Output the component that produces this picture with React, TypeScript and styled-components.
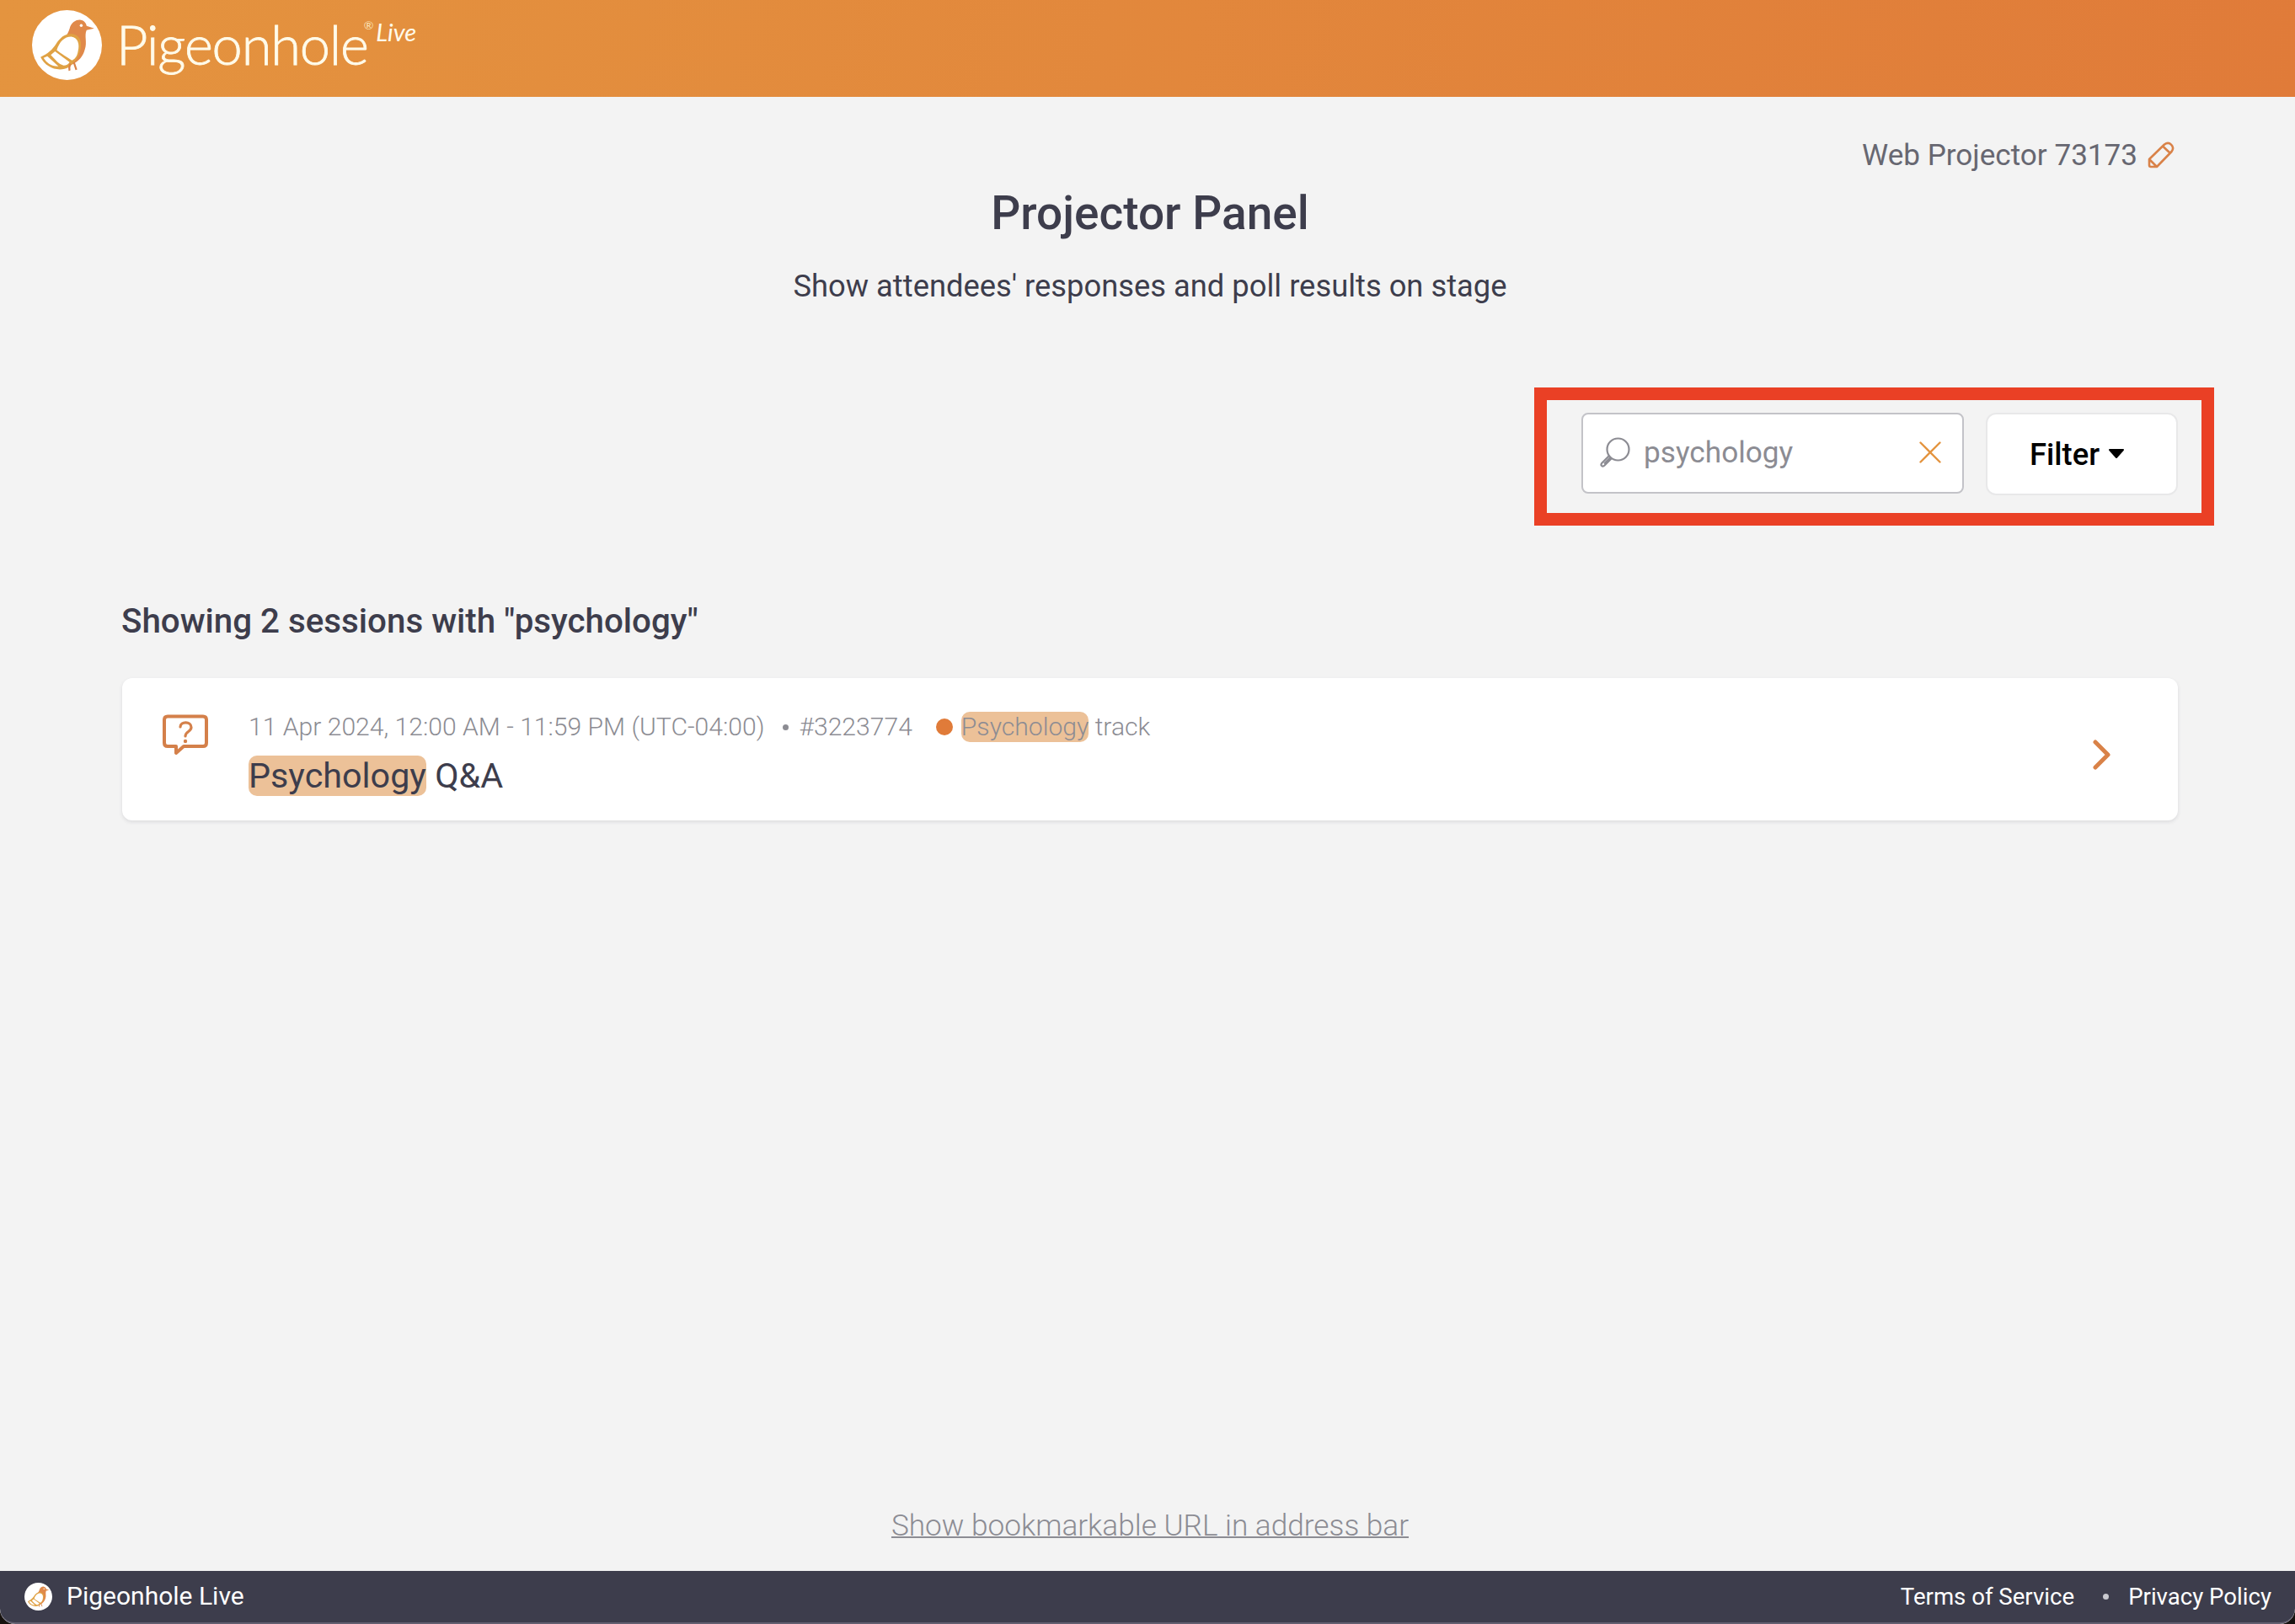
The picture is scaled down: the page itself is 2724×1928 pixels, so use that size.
import React from "react";
import styled, { createGlobalStyle } from "styled-components";

const GlobalStyle = createGlobalStyle`
  * {
    box-sizing: border-box;
  }

  body {
    margin: 0;
    background: #17120f;
    font-family: Roboto, "Liberation Sans", sans-serif;
    color: #3d3d4c;
  }
`;

const Page = styled.div`
  display: flex;
  flex-direction: column;
  height: 1928px;
  overflow: hidden;
  background: #f3f3f3;
  border-radius: 0 0 18px 18px;
`;

const Header = styled.header`
  display: flex;
  align-items: flex-start;
  height: 115px;
  flex-shrink: 0;
  padding: 12px 38px;
  background: linear-gradient(100deg, #e4943f, #e07b39);
`;

const Wordmark = styled.span`
  margin-left: 17px;
  font-family: Lato, "Open Sans", sans-serif;
  font-weight: 300;
  font-size: 65px;
  line-height: 81px;
  letter-spacing: -1.2px;
  -webkit-text-stroke: 0.8px #fffbea;
  color: #fffbea;
`;

const Registered = styled.span`
  margin-top: 6px;
  margin-left: -5px;
  font-family: Lato, sans-serif;
  font-size: 14px;
  line-height: 24px;
  color: #fbe3b8;
`;

const Live = styled.span`
  margin-left: 3px;
  font-family: Lato, sans-serif;
  font-style: italic;
  font-size: 29px;
  line-height: 51px;
  color: #fffbea;
`;

const Main = styled.main`
  display: flex;
  flex-direction: column;
  flex: 1;
  padding: 0 139px 0 145px;
`;

const ProjectorName = styled.div`
  display: flex;
  align-items: center;
  align-self: flex-end;
  gap: 12px;
  margin-top: 48px;
  margin-right: 4px;
  font-size: 35.1px;
  line-height: 42px;
  color: #676771;
`;

const Title = styled.h1`
  margin: 16px 0 0;
  font-weight: 500;
  font-size: 55px;
  line-height: 64px;
  text-align: center;
`;

const Subtitle = styled.p`
  margin: 34px 0 0;
  font-size: 36.35px;
  line-height: 42px;
  text-align: center;
`;

const Toolbar = styled.div`
  display: flex;
  align-items: flex-start;
  align-self: flex-end;
  gap: 26px;
  width: 807px;
  height: 164px;
  margin-top: 99px;
  margin-right: -43px;
  padding: 15px 0 0 41px;
  border: 15px solid #ea4025;
`;

const SearchBox = styled.div`
  display: flex;
  align-items: center;
  width: 454px;
  height: 96px;
  padding: 0 25px 2px 20px;
  background: #fff;
  border: 2px solid #c3c3c8;
  border-radius: 8px;
`;

const SearchText = styled.span`
  flex: 1;
  margin-left: 16px;
  font-size: 35.2px;
  color: #8c8c93;
`;

const FilterButton = styled.button`
  display: flex;
  align-items: center;
  justify-content: center;
  gap: 10px;
  width: 228px;
  height: 98px;
  padding: 0 11px 0 0;
  background: #fff;
  border: 2px solid #e8e8e9;
  border-radius: 12px;
  font-family: inherit;
  font-weight: 500;
  font-size: 36.4px;
  color: #000;
`;

const ResultHeading = styled.h2`
  margin: 91px 0 0 -1px;
  font-weight: 500;
  font-size: 40.3px;
  line-height: 46px;
`;

const SessionCard = styled.div`
  display: flex;
  align-items: flex-start;
  width: 2440px;
  height: 169px;
  margin-top: 44px;
  padding: 39px 78px 0 48px;
  background: #fff;
  border-radius: 12px;
  box-shadow: 0 2px 4px rgba(61, 61, 76, 0.12);
`;

const SessionBody = styled.div`
  flex: 1;
  margin-left: 48px;
`;

const Meta = styled.div`
  display: flex;
  align-items: center;
  height: 38px;
  font-weight: 300;
  font-size: 30.1px;
  line-height: 36px;
  white-space: pre;
  color: #8c8c93;
`;

const Dot = styled.span<{ $size: number; $color: string; $gap: string }>`
  width: ${(p) => p.$size}px;
  height: ${(p) => p.$size}px;
  margin: ${(p) => p.$gap};
  border-radius: 50%;
  background: ${(p) => p.$color};
`;

const Highlight = styled.mark`
  border-radius: 10px;
  background: #ecc198;
  color: inherit;
`;

const SessionTitle = styled.div`
  margin-top: 15px;
  font-size: 41.3px;
  line-height: 48px;
`;

const Chevron = styled.svg`
  margin-top: 34px;
`;

const BookmarkLink = styled.a`
  align-self: center;
  margin-top: auto;
  margin-bottom: 32px;
  font-weight: 300;
  font-size: 35.2px;
  line-height: 44px;
  color: #8c8c93;
  text-decoration: underline;
  text-decoration-thickness: 2px;
`;

const Footer = styled.footer`
  display: flex;
  align-items: center;
  height: 63px;
  flex-shrink: 0;
  padding: 0 28px 0 29px;
  background: #3d3d4c;
  border-bottom: 2px solid #625f70;
  border-radius: 0 0 18px 18px;
  font-size: 27.6px;
  color: #fff;
`;

const FooterBrand = styled.span`
  flex: 1;
  margin-left: 17px;
  margin-bottom: 3px;
  font-size: 30px;
`;

const PigeonLogo = ({ size }: { size: number }) => (
  <svg width={size} height={size} viewBox="0 0 82 82">
    <circle cx="41" cy="41" r="41" fill="#fff" />
    <path
      d="M31 38C39 33 42 28 44 22C46 14 52 11 57 11.500C61 12 63.500 15 64 18.500L73 21.500L64 23.500C61 30 65 38 62 46C60 54 55 60 47 64Z"
      fill="#e0894a"
    />
    <circle cx="57.700" cy="18" r="1.700" fill="#fff" />
    <path
      d="M10 55C19 51 24 46 28 40C33 32 39 27 47 28C55 29 59 36 57 45C56 54 50 62 43 67C36 71 26 70 20 66C15 63 12 59 10 55Z"
      fill="#e0a244"
    />
    <path d="M29 47C32 37 38 31 46 31C54 32 56 40 54 48C53 54 51 57 47 59C42 56 34 51 29 47Z" fill="#fff" />
    <path d="M27 48.500L44 61Q42 65 37 65Q33 64 30 61L22 52.500Z" fill="#fff" />
    <path d="M18 54L31 66Q24 66 20 63Q16 60 13.500 56Z" fill="#fff" />
    <path d="M45 63Q43 67 44 71M49 61L52 70" fill="none" stroke="#d98248" strokeWidth="2.200" />
  </svg>
);

const PencilIcon = () => (
  <svg width="32" height="32" viewBox="0 0 32 32" fill="none" stroke="#d98248" strokeWidth="2.600" strokeLinejoin="round">
    <path d="M2 21L20 3.500C26 -1 33 6 28.500 12L11 30H4Q2 30 2 28ZM2 21L11 30M18 5.500L27 14" />
  </svg>
);

const SearchIcon = () => (
  <svg width="36" height="36" viewBox="0 0 36 36" fill="none" stroke="#8c8c93" strokeWidth="2.200">
    <circle cx="21.500" cy="14.500" r="13" />
    <path d="M11 22L2.500 30.500C0 33.500 3 36 5.500 33.500L14 25M12.500 24L5 31.500" strokeLinejoin="round" />
  </svg>
);

const ClearIcon = () => (
  <svg width="26" height="26" viewBox="0 0 26 26" stroke="#e4943f" strokeWidth="2.400" strokeLinecap="round">
    <path d="M1.500 1.500L24.500 24.500M24.500 1.500L1.500 24.500" />
  </svg>
);

const QuestionIcon = () => (
  <svg width="54" height="54" viewBox="0 0 54 54" fill="none" stroke="#d4804a" strokeLinejoin="round" strokeLinecap="round">
    <path d="M6 6.500H48Q52 6.500 52 10.500V38Q52 42 48 42H25L16 50V42H6Q2 42 2 38V10.500Q2 6.500 6 6.500Z" strokeWidth="4" />
    <path d="M21 19C21 12 34 12 34 19.500C34 25 27 24 27 30" strokeWidth="3.200" />
    <circle cx="27" cy="36" r="2.200" fill="#d4804a" stroke="none" />
  </svg>
);

export default function App() {
  return (
    <>
      <GlobalStyle />
      <Page>
        <Header>
          <PigeonLogo size={83} />
          <Wordmark>Pigeonhole</Wordmark>
          <Registered>®</Registered>
          <Live>Live</Live>
        </Header>
        <Main>
          <ProjectorName>
            Web Projector 73173
            <PencilIcon />
          </ProjectorName>
          <Title>Projector Panel</Title>
          <Subtitle>Show attendees' responses and poll results on stage</Subtitle>
          <Toolbar>
            <SearchBox>
              <SearchIcon />
              <SearchText>psychology</SearchText>
              <ClearIcon />
            </SearchBox>
            <FilterButton>
              Filter
              <svg width="20" height="12" viewBox="0 0 20 12">
                <path d="M2 1H18L10 10Z" fill="#000" stroke="#000" strokeWidth="2" strokeLinejoin="round" />
              </svg>
            </FilterButton>
          </Toolbar>
          <ResultHeading>Showing 2 sessions with "psychology"</ResultHeading>
          <SessionCard>
            <QuestionIcon />
            <SessionBody>
              <Meta>
                <span>11 Apr 2024, 12:00 AM - 11:59 PM (UTC-04:00)</span>
                <Dot $size={7} $color="#8c8c93" $gap="0 12px 0 22px" />
                <span>#3223774</span>
                <Dot $size={20} $color="#e07b39" $gap="0 10px 0 28px" />
                <Highlight>Psychology</Highlight>
                <span> track</span>
              </Meta>
              <SessionTitle>
                <Highlight>Psychology</Highlight> Q&amp;A
              </SessionTitle>
            </SessionBody>
            <Chevron width="24" height="36" viewBox="0 0 24 36" fill="none" stroke="#d98248" strokeWidth="5" strokeLinecap="round" strokeLinejoin="round">
              <path d="M4 3L19 18L4 33" />
            </Chevron>
          </SessionCard>
          <BookmarkLink>Show bookmarkable URL in address bar</BookmarkLink>
        </Main>
        <Footer>
          <PigeonLogo size={33} />
          <FooterBrand>Pigeonhole Live</FooterBrand>
          <span>Terms of Service</span>
          <Dot $size={7} $color="#c9c9cf" $gap="0 23px 0 34px" />
          <span>Privacy Policy</span>
        </Footer>
      </Page>
    </>
  );
}
